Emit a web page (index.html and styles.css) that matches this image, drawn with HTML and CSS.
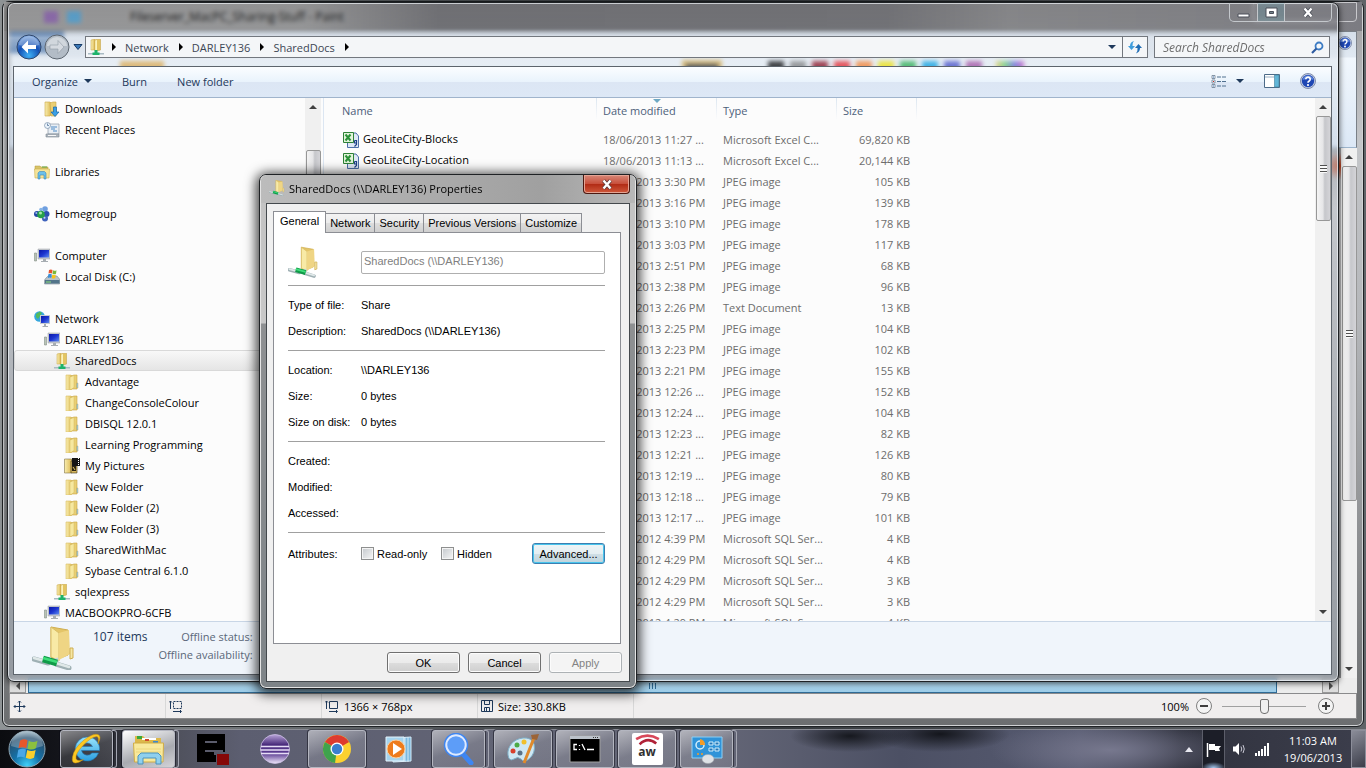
FILE: index.html
```html
<!DOCTYPE html>
<html lang="en">
<head>
    <meta charset="UTF-8">
    <meta name="viewport" content="width=device-width, initial-scale=1.0">
    <title>SharedDocs</title>
    <link rel="stylesheet" href="styles.css">
</head>
<body>
    <!-- Icon library -->
    <svg class="icon-defs" aria-hidden="true">
        <defs>
            <linearGradient id="gold" x1="0" y1="0" x2="1" y2="0">
                <stop offset="0" stop-color="#f9eeb0"/><stop offset="1" stop-color="#dcb954"/>
            </linearGradient>
            <linearGradient id="screen" x1="0" y1="0" x2="1" y2="1">
                <stop offset="0" stop-color="#0a17a8"/><stop offset=".5" stop-color="#1d36d0"/><stop offset="1" stop-color="#5f8df0"/>
            </linearGradient>
            <radialGradient id="blueball" cx=".5" cy=".85" r=".9">
                <stop offset="0" stop-color="#3fb0f5"/><stop offset=".5" stop-color="#1450b4"/><stop offset="1" stop-color="#8fb6e6"/>
            </radialGradient>
            <radialGradient id="orb" cx=".5" cy=".95" r=".95">
                <stop offset="0" stop-color="#3fd0f8"/><stop offset=".4" stop-color="#1471a8"/><stop offset=".8" stop-color="#28506e"/><stop offset="1" stop-color="#9db8c6"/>
            </radialGradient>
            <linearGradient id="eclipse" x1="0" y1="0" x2="0" y2="1">
                <stop offset="0" stop-color="#b9a5d8"/><stop offset=".35" stop-color="#4a2c7c"/><stop offset=".65" stop-color="#5b3c92"/><stop offset="1" stop-color="#f0e8fb"/>
            </linearGradient>
            <linearGradient id="iblue" x1="0" y1="0" x2="0" y2="1">
                <stop offset="0" stop-color="#9be4fb"/><stop offset="1" stop-color="#2a9fe0"/>
            </linearGradient>
        </defs>
        <symbol id="folder" viewBox="0 0 16 16">
            <path d="M2 1h5l1 1v13l-1 1H2z" fill="url(#gold)" stroke="#d8bd62" stroke-width=".6"/>
            <path d="M7 2l3-1h3v14H8z" fill="#e9cf74" stroke="#c9a545" stroke-width=".6"/>
            <path d="M6 3l4-1.500v12L7 15.500H6z" fill="#f6e8a0" stroke="#d0b050" stroke-width=".4"/>
            <path d="M12.500 9h1.500v5h-1.500z" fill="#8fc6e8" stroke="#c9a545" stroke-width=".4"/>
        </symbol>
        <symbol id="netfolder" viewBox="0 0 16 16">
            <path d="M3 1l4-1v11H3z" fill="url(#gold)" stroke="#c9a545" stroke-width=".5"/>
            <path d="M7 1l2-.8h3.500V11L9 12H7z" fill="#e3c561" stroke="#c09c3c" stroke-width=".5"/>
            <path d="M7.200 1.500l1.800-.5v10l-1.800.5z" fill="#fbf2bd"/>
            <path d="M0 14h16v1.500H0z" fill="#a9bbc4"/>
            <path d="M6.500 11h3v2.500h2V16h-7v-2.500h2z" fill="#1db36a"/>
        </symbol>
        <symbol id="bigshare" viewBox="0 0 44 44">
            <path d="M19 1l17 3v25l-13 5-4-3z" fill="#e4c568" stroke="#cfae50"/>
            <path d="M19 1l8 6v28l-8-4z" fill="#f8eaa6" stroke="#d9bd66"/>
            <path d="M27 7l10-3 1 24-11 6z" fill="#efd584"/>
            <path d="M38 22h3v10l-3 1z" fill="#f5e6a4" stroke="#cfae50"/>
            <path d="M24 32l1 5" stroke="#c6d6da" stroke-width="4"/>
            <path d="M2 33l14 4M24 38l13 4" stroke="#9fb0b4" stroke-width="5" stroke-linecap="round"/>
            <path d="M2 32l14 4M24 37l13 4" stroke="#dfe8e8" stroke-width="2.500" stroke-linecap="round"/>
            <path d="M11 33l14 4" stroke="#109a48" stroke-width="7"/>
            <path d="M11 32l14 4" stroke="#3fdd7a" stroke-width="2.500"/>
        </symbol>
        <symbol id="downloads" viewBox="0 0 16 16">
            <path d="M1 1h5l1 1v12l-1 1H1z" fill="url(#gold)" stroke="#c9a545" stroke-width=".6"/>
            <path d="M6 2l3-1h3v14H7z" fill="#e9cf74" stroke="#c9a545" stroke-width=".6"/>
            <path d="M9.500 6h3v5H15l-4 4.500L7 11h2.500z" fill="#3a9fe6" stroke="#1565a8" stroke-width=".7"/>
        </symbol>
        <symbol id="recent" viewBox="0 0 16 16">
            <path d="M4 2h11v10H4z" fill="#e8eef4" stroke="#8d9aa8" stroke-width=".7"/>
            <path d="M7 5h6M7 7h4M9 9h4" stroke="#4c8ac6"/>
            <path d="M2 12h13v3H2z" fill="#aeb7bf" stroke="#7d8790" stroke-width=".6"/>
            <path d="M4 13.500h8" stroke="#f6f6f6"/>
            <circle cx="3.500" cy="3.500" r="3" fill="#eaf3fb" stroke="#7a8fa8" stroke-width=".7"/>
            <path d="M3.500 1.500v2h1.500" stroke="#41648c" stroke-width=".7" fill="none"/>
        </symbol>
        <symbol id="libraries" viewBox="0 0 16 16">
            <path d="M1 2h5l1 1h7v3H1z" fill="#d8c468" stroke="#b59a3c" stroke-width=".5"/>
            <path d="M8 3h5" stroke="#5fa84a"/>
            <path d="M.5 5h15l-.5 9H1z" fill="#f5e49a" stroke="#cdb04e" stroke-width=".6"/>
            <path d="M4 15V9l1.500-1.500h5L12 9v6h-2v-4H6v4z" fill="#6cc0ea" stroke="#3b87b8" stroke-width=".6"/>
        </symbol>
        <symbol id="homegroup" viewBox="0 0 16 16">
            <circle cx="11" cy="3" r="2.800" fill="#6f9fe0"/><circle cx="12.500" cy="8" r="3" fill="#2c50b0"/>
            <circle cx="3" cy="8" r="3" fill="#2448a8"/><circle cx="7" cy="3.500" r="1.800" fill="#86b4e8"/>
            <circle cx="11" cy="12.500" r="3" fill="#3f62bc"/><circle cx="7" cy="8.500" r="3.800" fill="#28a048"/>
            <circle cx="6.500" cy="7" r="1.500" fill="#a6e6ac"/><circle cx="2.300" cy="7" r="1" fill="#9cb8ee"/><circle cx="10.500" cy="11.800" r="1" fill="#c5d6f6"/>
        </symbol>
        <symbol id="computer" viewBox="0 0 16 16">
            <path d="M.5 5h2v8h-2z" fill="#b9c4b6" stroke="#848f88" stroke-width=".6"/>
            <path d="M4 1h12v10H4z" fill="#c8ccd0" stroke="#9a9fa5" stroke-width=".5"/>
            <path d="M5 2h10v7.500H5z" fill="url(#screen)"/>
            <path d="M9 11h3v2h2v1H7v-1h2z" fill="#a7adb2"/>
        </symbol>
        <symbol id="network" viewBox="0 0 16 16">
            <circle cx="5.500" cy="5.500" r="5.300" fill="#35a6dd"/>
            <path d="M2 3l4-2.500 2 1.500-2 3-2 3-2-2zM6 7l3 1-2 3z" fill="#52ba5d"/>
            <path d="M6 4h10v9H6z" fill="#c8ccd0"/><path d="M7 5h8.200v7H7z" fill="url(#screen)"/>
            <path d="M10 13h2v2h2v1H8.500v-1H10z" fill="#a7adb2"/>
        </symbol>
        <symbol id="disk" viewBox="0 0 16 16">
            <path d="M2 9l2-2h9l2.500 3v5H.5v-4z" fill="#b8c2c8" stroke="#6b7a84" stroke-width=".5"/>
            <path d="M1 11h14.500v3.500H1z" fill="#52748a"/><path d="M2 13h5" stroke="#8fe07d"/>
            <path d="M5 1q2-1 3.500 0L8 4.500q-2-.8-3.500 0z" fill="#e8542c"/><path d="M9 1.300q2 1 3.500 0L12 4.700q-2 1-3.500 0z" fill="#7ab83a"/>
            <path d="M4.300 5.200q2-.8 3.500 0L7.300 9Q6 8 3.800 9z" fill="#3a8fd8"/><path d="M8.300 5.400q2 1 3.500 0L11.300 9q-2 1-3.500 0z" fill="#f6c21c"/>
        </symbol>
        <symbol id="pictures" viewBox="0 0 16 16">
            <path d="M.5 1h7v14h-7z" fill="url(#gold)" stroke="#6b5b2c" stroke-width=".5"/>
            <path d="M7 3h6v12H7z" fill="#d8b860" stroke="#3b2f10" stroke-width=".6"/>
            <path d="M8 0h8v8H8z" fill="#151515"/><path d="M14.500 0v8" stroke="#fff" stroke-dasharray="1 1"/>
            <path d="M8 8h4v5H8z" fill="#2b2414"/><path d="M9 9l2 3" stroke="#e8c868"/>
        </symbol>
        <symbol id="excel" viewBox="0 0 16 16">
            <path d="M4.500 1H13l2.500 3v11.500h-11z" fill="#dfe8f6" stroke="#4c6fa8"/>
            <path d="M.5 .5h10v10H.5z" fill="#e2f4da" stroke="#2e8136"/>
            <path d="M2.500 2.500l5 6M7.500 2.500l-5 6" stroke="#2b9138" stroke-width="2"/>
            <path d="M11.500 8.500h2v4l-2 2M11.500 8.500v2.500h2" fill="none" stroke="#1d3f86" stroke-width="1.200"/>
        </symbol>
        <symbol id="help" viewBox="0 0 16 16">
            <circle cx="8" cy="8" r="7.500" fill="#c8d2e4" stroke="#67759a" stroke-width=".8"/>
            <circle cx="8" cy="8" r="6.200" fill="#1f47b4"/><path d="M2.500 7a5.600 5.600 0 0 1 11 0q-5-2-11 0z" fill="#5f87dc"/>
            <path d="M5.800 6.300a2.200 2.200 0 1 1 3.400 1.800Q8 8.800 8 9.800" fill="none" stroke="#fff" stroke-width="1.700"/><circle cx="8" cy="12" r="1.100" fill="#fff"/>
        </symbol>
        <symbol id="flag4" viewBox="0 0 20 20">
            <path d="M4 3q3-2 6-.5L9 9Q6 7.500 2.800 9z" fill="#e9572b"/><path d="M11 3q3.500 2 7 0l-1.300 6q-3.200 2-6.700.3z" fill="#8bc03f"/>
            <path d="M2.600 10.200Q6 8.700 8.800 10L7.600 16.500Q5 15 1.500 16.500z" fill="#4aa7e6"/><path d="M9.800 10.400q3.400 1.700 6.700 0l-1.300 6.200q-3 1.800-6.600 0z" fill="#fbcf2c"/>
        </symbol>
    </svg>

    <main class="desktop">
        <!-- Paint, behind -->
        <section class="window paint" aria-label="Paint">
            <header class="paint-title">
                <span class="quick quick-save"></span>
                <span class="quick quick-undo"></span>
                <span class="paint-name">Fileserver_MacPC_Sharing-Stuff - Paint</span>
                <span class="paint-caption"></span>
            </header>
            <div class="ribbon">
                <span class="file-tab"></span>
                <span class="brush-mark"></span>
                <span class="size-mark"></span>
                <span class="swatches">
                    <i class="swatch black"></i><i class="swatch gray"></i><i class="swatch maroon"></i><i class="swatch red"></i><i class="swatch orange"></i><i class="swatch yellow"></i><i class="swatch green"></i><i class="swatch blue"></i><i class="swatch indigo"></i><i class="swatch purple"></i><i class="swatch rainbow"></i>
                </span>
                <svg class="ribbon-help"><use href="#help"/></svg>
            </div>
            <div class="paint-work">
                <div class="paint-canvas"></div>
                <div class="vscroll paint-v">
                    <span class="arrow up"></span>
                    <span class="thumb"></span>
                    <span class="arrow down"></span>
                </div>
            </div>
            <div class="hscroll">
                <span class="hbtn"><i class="arrow left"></i></span>
                <span class="hthumb"></span>
                <span class="hbtn"><i class="arrow right"></i></span>
            </div>
            <footer class="status">
                <div class="cell"><svg width="13" height="13" viewBox="0 0 13 13" fill="none" stroke="#1e395b"><path d="M6.500 1v11M1 6.500h11M5 2.500l1.500-1.500L8 2.500M5 10.500L6.500 12 8 10.500M2.500 5L1 6.500 2.500 8M10.500 5L12 6.500 10.500 8"/></svg></div>
                <div class="cell"><svg width="14" height="13" viewBox="0 0 14 13" fill="none" stroke="#1e395b"><path d="M4.500 1.500h8v7h-8z" stroke-dasharray="2 1"/><path d="M1.500 9V1M0 2.500L1.500 1 3 2.500M4 11.500h8M11 10l1.500 1.500L11 13"/></svg></div>
                <div class="cell"><svg width="14" height="13" viewBox="0 0 14 13" fill="none" stroke="#1e395b"><path d="M4.500 1.500h8v7h-8z"/><path d="M1.500 9V1M0 2.500L1.500 1 3 2.500M4 11.500h8M11 10l1.500 1.500L11 13"/></svg>1366 × 768px</div>
                <div class="cell"><svg width="12" height="12" viewBox="0 0 12 12" fill="none" stroke="#1e395b"><path d="M.5 .5h11v11H.5zM3.500 .5v4h5v-4M3.500 11.500v-4h5v4M5.500 8v3"/></svg>Size: 330.8KB</div>
                <div class="zoom">
                    <label for="zoom">100%</label>
                    <button class="round" aria-label="Zoom out"><svg viewBox="0 0 10 10"><path d="M1 5h8"/></svg></button>
                    <input type="range" id="zoom" min="0" max="100" value="50">
                    <button class="round" aria-label="Zoom in"><svg viewBox="0 0 10 10"><path d="M1 5h8M5 1v8"/></svg></button>
                </div>
            </footer>
        </section>

        <!-- Explorer -->
        <section class="window explorer" aria-label="SharedDocs">
            <header class="caption-row">
                <div class="caption">
                    <button aria-label="Minimize"><svg width="13" height="11" viewBox="0 0 13 11"><path d="M1 7h11v3H1z" fill="#fff" stroke="#4a4e58"/></svg></button>
                    <button class="max" aria-label="Maximize"><svg width="13" height="11" viewBox="0 0 13 11"><path d="M1 1h11v9H1zM4.500 4.500h4v2h-4z" fill="#fff" fill-rule="evenodd" stroke="#4a4e58"/></svg></button>
                    <button class="cls" aria-label="Close"><svg width="12" height="11" viewBox="0 0 12 11"><path d="M2.500 1.500l7 8M9.500 1.500l-7 8" stroke="#4a4e58" stroke-width="4"/><path d="M2.500 1.500l7 8M9.500 1.500l-7 8" stroke="#fff" stroke-width="2.400"/></svg></button>
                </div>
            </header>
            <div class="address-row">
                <div class="travel">
                    <button aria-label="Back"><svg width="26" height="26" viewBox="0 0 26 26"><circle cx="13" cy="13" r="12" fill="url(#blueball)" stroke="#31476a"/><path d="M3 11a10 9 0 0 1 20 0q-10 3-20 0z" fill="#fff" opacity=".3"/><path d="M12 6.500L5.500 13l6.500 6.500v-4.500h8v-4h-8z" fill="#fff"/></svg></button>
                    <button aria-label="Forward"><svg width="26" height="26" viewBox="0 0 26 26"><circle cx="13" cy="13" r="12" fill="#b3bcc6" stroke="#5d6670"/><path d="M3 12a10 9 0 0 1 20 0z" fill="#fff" opacity=".4"/><path d="M14 6.500l6 6.500-6 6.500v-4.500H6v-4h8z" fill="#d5dae0" stroke="#929ba5" stroke-width=".6"/></svg></button>
                    <button class="recent-btn" aria-label="Recent pages"><svg width="10" height="6" viewBox="0 0 10 6"><path d="M1 .5h8L5 5.500z" fill="#3a78b8" stroke="#173a66"/></svg></button>
                </div>
                <nav class="crumbs" aria-label="Path">
                    <svg class="ico"><use href="#netfolder"/></svg>
                    <i class="tri"></i><a href="#">Network</a>
                    <i class="tri"></i><a href="#">DARLEY136</a>
                    <i class="tri"></i><a href="#">SharedDocs</a>
                    <i class="tri"></i>
                    <button class="crumb-drop" aria-label="Previous locations"><i class="caret"></i></button>
                    <button class="refresh" aria-label="Refresh"><svg width="14" height="14" viewBox="0 0 14 14"><path d="M0 6h2q0-4 4-5-2 2-1.500 5H7L3.500 10z" fill="#3f9ddc"/><path d="M14 8h-2q0 4-4 5.500Q10 11 9.500 8H7l3.500-4z" fill="#1f6cb4"/></svg></button>
                </nav>
                <div class="search">
                    <input type="text" aria-label="Search SharedDocs" placeholder="Search SharedDocs">
                    <svg width="13" height="13" viewBox="0 0 13 13" fill="none"><circle cx="8" cy="5" r="3.500" stroke="#3d7cc4" stroke-width="1.800"/><path d="M5.500 7.500L1 12" stroke="#2d5aa0" stroke-width="2.200"/></svg>
                </div>
            </div>
            <div class="client">
                <div class="toolbar">
                    <button>Organize <i class="caret"></i></button>
                    <button>Burn</button>
                    <button>New folder</button>
                    <div class="tools">
                        <button aria-label="Change view"><svg width="16" height="13" viewBox="0 0 16 13"><path d="M1 .5h3v3H1zM1 5h3v3H1zM1 9.500h3v3H1z" fill="#fff" stroke="#6a7c90" stroke-width=".8"/><path d="M2 2h1M2 11h1" stroke="#2d6cb8"/><path d="M2 6.500h1" stroke="#c03030"/><path d="M6 2h10M6 6.500h10M6 11h10" stroke="#50708f" stroke-dasharray="4 1"/></svg></button>
                        <button class="view-drop" aria-label="More options"><i class="caret"></i></button>
                        <button aria-label="Preview pane"><svg width="16" height="14" viewBox="0 0 16 14"><path d="M.5 .5h15v13H.5z" fill="#fff" stroke="#4d6b88"/><path d="M1 3h9.500" stroke="#9ab0c4"/><path d="M10.500 1H15v12h-4.500z" fill="#62b6d8" stroke="#3f7f9c" stroke-width=".6"/></svg></button>
                        <button aria-label="Help"><svg class="ico"><use href="#help"/></svg></button>
                    </div>
                </div>
                <div class="panes">
                    <nav class="tree" aria-label="Folders">
                        <ul>
                            <li class="lv1"><a href="#"><svg class="ico"><use href="#downloads"/></svg>Downloads</a></li>
                            <li class="lv1"><a href="#"><svg class="ico"><use href="#recent"/></svg>Recent Places</a></li>
                            <li class="group"><a href="#"><svg class="ico"><use href="#libraries"/></svg>Libraries</a></li>
                            <li class="group"><a href="#"><svg class="ico"><use href="#homegroup"/></svg>Homegroup</a></li>
                            <li class="group"><a href="#"><svg class="ico"><use href="#computer"/></svg>Computer</a></li>
                            <li class="lv1"><a href="#"><svg class="ico"><use href="#disk"/></svg>Local Disk (C:)</a></li>
                            <li class="group"><a href="#"><svg class="ico"><use href="#network"/></svg>Network</a></li>
                            <li class="lv1"><a href="#"><svg class="ico"><use href="#computer"/></svg>DARLEY136</a></li>
                            <li class="lv2 selected"><a href="#"><svg class="ico"><use href="#netfolder"/></svg>SharedDocs</a></li>
                            <li class="lv3"><a href="#"><svg class="ico"><use href="#folder"/></svg>Advantage</a></li>
                            <li class="lv3"><a href="#"><svg class="ico"><use href="#folder"/></svg>ChangeConsoleColour</a></li>
                            <li class="lv3"><a href="#"><svg class="ico"><use href="#folder"/></svg>DBISQL 12.0.1</a></li>
                            <li class="lv3"><a href="#"><svg class="ico"><use href="#folder"/></svg>Learning Programming</a></li>
                            <li class="lv3"><a href="#"><svg class="ico"><use href="#pictures"/></svg>My Pictures</a></li>
                            <li class="lv3"><a href="#"><svg class="ico"><use href="#folder"/></svg>New Folder</a></li>
                            <li class="lv3"><a href="#"><svg class="ico"><use href="#folder"/></svg>New Folder (2)</a></li>
                            <li class="lv3"><a href="#"><svg class="ico"><use href="#folder"/></svg>New Folder (3)</a></li>
                            <li class="lv3"><a href="#"><svg class="ico"><use href="#folder"/></svg>SharedWithMac</a></li>
                            <li class="lv3"><a href="#"><svg class="ico"><use href="#folder"/></svg>Sybase Central 6.1.0</a></li>
                            <li class="lv2"><a href="#"><svg class="ico"><use href="#netfolder"/></svg>sqlexpress</a></li>
                            <li class="lv1"><a href="#"><svg class="ico"><use href="#computer"/></svg>MACBOOKPRO-6CFB</a></li>
                        </ul>
                        <div class="vscroll tree-v">
                            <span class="arrow up"></span>
                            <span class="thumb"></span>
                            <span class="arrow down"></span>
                        </div>
                    </nav>
                    <div class="files">
                        <table>
                            <colgroup><col class="c-name"><col class="c-date"><col class="c-type"><col class="c-size"></colgroup>
                            <thead>
                                <tr><th>Name</th><th class="sorted">Date modified</th><th>Type</th><th>Size</th></tr>
                            </thead>
                            <tbody>
                                <tr><td><svg class="ico"><use href="#excel"/></svg>GeoLiteCity-Blocks</td><td>18/06/2013 11:27 ...</td><td>Microsoft Excel C...</td><td>69,820 KB</td></tr>
                                <tr><td><svg class="ico"><use href="#excel"/></svg>GeoLiteCity-Location</td><td>18/06/2013 11:13 ...</td><td>Microsoft Excel C...</td><td>20,144 KB</td></tr>
                                <tr><td></td><td>18/06/2013 3:30 PM</td><td>JPEG image</td><td>105 KB</td></tr>
                                <tr><td></td><td>18/06/2013 3:16 PM</td><td>JPEG image</td><td>139 KB</td></tr>
                                <tr><td></td><td>18/06/2013 3:10 PM</td><td>JPEG image</td><td>178 KB</td></tr>
                                <tr><td></td><td>18/06/2013 3:03 PM</td><td>JPEG image</td><td>117 KB</td></tr>
                                <tr><td></td><td>18/06/2013 2:51 PM</td><td>JPEG image</td><td>68 KB</td></tr>
                                <tr><td></td><td>18/06/2013 2:38 PM</td><td>JPEG image</td><td>96 KB</td></tr>
                                <tr><td></td><td>18/06/2013 2:26 PM</td><td>Text Document</td><td>13 KB</td></tr>
                                <tr><td></td><td>18/06/2013 2:25 PM</td><td>JPEG image</td><td>104 KB</td></tr>
                                <tr><td></td><td>18/06/2013 2:23 PM</td><td>JPEG image</td><td>102 KB</td></tr>
                                <tr><td></td><td>18/06/2013 2:21 PM</td><td>JPEG image</td><td>155 KB</td></tr>
                                <tr><td></td><td>18/06/2013 12:26 ...</td><td>JPEG image</td><td>152 KB</td></tr>
                                <tr><td></td><td>18/06/2013 12:24 ...</td><td>JPEG image</td><td>104 KB</td></tr>
                                <tr><td></td><td>18/06/2013 12:23 ...</td><td>JPEG image</td><td>82 KB</td></tr>
                                <tr><td></td><td>18/06/2013 12:21 ...</td><td>JPEG image</td><td>126 KB</td></tr>
                                <tr><td></td><td>18/06/2013 12:19 ...</td><td>JPEG image</td><td>80 KB</td></tr>
                                <tr><td></td><td>18/06/2013 12:18 ...</td><td>JPEG image</td><td>79 KB</td></tr>
                                <tr><td></td><td>18/06/2013 12:17 ...</td><td>JPEG image</td><td>101 KB</td></tr>
                                <tr><td></td><td>12/12/2012 4:39 PM</td><td>Microsoft SQL Ser...</td><td>4 KB</td></tr>
                                <tr><td></td><td>12/12/2012 4:29 PM</td><td>Microsoft SQL Ser...</td><td>4 KB</td></tr>
                                <tr><td></td><td>12/12/2012 4:29 PM</td><td>Microsoft SQL Ser...</td><td>3 KB</td></tr>
                                <tr><td></td><td>12/12/2012 4:29 PM</td><td>Microsoft SQL Ser...</td><td>3 KB</td></tr>
                                <tr><td></td><td>12/12/2012 4:29 PM</td><td>Microsoft SQL Ser...</td><td>4 KB</td></tr>
                            </tbody>
                        </table>
                        <div class="vscroll files-v">
                            <span class="arrow up"></span>
                            <span class="thumb"></span>
                            <span class="arrow down"></span>
                        </div>
                    </div>
                </div>
                <footer class="details">
                    <svg width="44" height="44"><use href="#bigshare"/></svg>
                    <strong>107 items</strong>
                    <div class="offline"><span>Offline status:</span><span>Offline availability:</span></div>
                </footer>
            </div>
        </section>

        <!-- Properties dialog -->
        <section class="window dialog" role="dialog" aria-label="SharedDocs Properties">
            <header class="dialog-title">
                <svg class="ico"><use href="#bigshare"/></svg>
                <h1>SharedDocs (\\DARLEY136) Properties</h1>
                <button class="close" aria-label="Close"><svg width="12" height="11" viewBox="0 0 12 11"><path d="M2.500 1.500l7 8M9.500 1.500l-7 8" stroke="#5c3a3a" stroke-width="4"/><path d="M2.500 1.500l7 8M9.500 1.500l-7 8" stroke="#fff" stroke-width="2.400"/></svg></button>
            </header>
            <form class="dialog-body">
                <div class="tabs">
                    <button type="button" class="tab active">General</button>
                    <button type="button" class="tab">Network</button>
                    <button type="button" class="tab">Security</button>
                    <button type="button" class="tab">Previous Versions</button>
                    <button type="button" class="tab">Customize</button>
                </div>
                <div class="page">
                    <div class="page-head">
                        <svg width="31" height="32"><use href="#bigshare"/></svg>
                        <input type="text" aria-label="Name" value="SharedDocs (\\DARLEY136)" disabled>
                    </div>
                    <dl>
                        <dt>Type of file:</dt><dd>Share</dd>
                        <dt>Description:</dt><dd>SharedDocs (\\DARLEY136)</dd>
                    </dl>
                    <dl>
                        <dt>Location:</dt><dd>\\DARLEY136</dd>
                        <dt>Size:</dt><dd>0 bytes</dd>
                        <dt>Size on disk:</dt><dd>0 bytes</dd>
                    </dl>
                    <dl>
                        <dt>Created:</dt><dd></dd>
                        <dt>Modified:</dt><dd></dd>
                        <dt>Accessed:</dt><dd></dd>
                    </dl>
                    <div class="attributes">
                        <span class="attr-label">Attributes:</span>
                        <label class="check"><input type="checkbox">Read-only</label>
                        <label class="check"><input type="checkbox">Hidden</label>
                        <button type="button" class="btn default">Advanced...</button>
                    </div>
                </div>
                <div class="actions">
                    <button type="button" class="btn">OK</button>
                    <button type="button" class="btn">Cancel</button>
                    <button type="button" class="btn" disabled>Apply</button>
                </div>
            </form>
        </section>
    </main>

    <footer class="taskbar">
        <button class="start" aria-label="Start"><svg width="38" height="38" viewBox="0 0 38 38"><circle cx="19" cy="19" r="18" fill="url(#orb)" stroke="#8ea6b4"/><path d="M3 16a16 15 0 0 1 32 0q-16 6-32 0z" fill="#fff" opacity=".25"/><svg x="7" y="7" width="25" height="25"><use href="#flag4"/></svg></svg></button>
        <div class="apps">
            <button class="app open stack dark" aria-label="Internet Explorer"><svg viewBox="0 0 32 32"><path d="M16 4a12 12 0 1 0 11.500 16h-6.500a6 6 0 0 1-10.500-2.500h18A12 12 0 0 0 16 4zm-5.500 9.500a6 6 0 0 1 11 0z" fill="url(#iblue)" stroke="#2079b8" stroke-width=".6"/><path d="M27 11q4-8 0-9.500Q22 0 13 7 3 15 1.500 24q-1 6 3 6 3 0 8-3.500Q6 29 5 25.500 4 21 12 12.500 20 4 25.500 3.500q3 0 1.500 7.500z" fill="#fcc822" stroke="#c98f10" stroke-width=".5"/></svg></button>
            <button class="app open stack lit" aria-label="Windows Explorer"><svg viewBox="0 0 32 32"><path d="M2 3h8l2 2h16v6H2z" fill="#dcb84a"/><path d="M4 3h5v3H4z" fill="#3aa83a"/><path d="M9 5h14v2H9z" fill="#fff"/><path d="M12 6h4v2h-4z" fill="#d04a2c"/><path d="M20 8h5v2h-5z" fill="#3a8ad0"/><path d="M.5 10h30L30 29H1.500z" fill="#f8e99c" stroke="#d0ad46"/><path d="M3 16h25M3 19h25" stroke="#ecd67a"/><path d="M5 31v-8l3-3h17l3 3v8h-5v-6H10v6z" fill="#8fd0ee" stroke="#4b93bd"/></svg></button>
            <button class="app" aria-label="Editor"><svg viewBox="0 0 32 32"><path d="M0 1h28v18H17v3h2v7H0z" fill="#000"/><path d="M8 9h12M8 18h18" stroke="#5a5c6c" stroke-width="2"/><path d="M20 21h12v11H20z" fill="#860808"/></svg></button>
            <button class="app" aria-label="Eclipse"><svg viewBox="0 0 32 32"><circle cx="16" cy="16" r="14.500" fill="url(#eclipse)" stroke="#cdbfe4" stroke-width=".8"/><path d="M2 13.500h28M1.500 17h29M2 20.500h28" stroke="#e6ddf6" stroke-width="1.400"/></svg></button>
            <button class="app open" aria-label="Chrome"><svg viewBox="0 0 32 32"><circle cx="16" cy="16" r="14" fill="#fbd130"/><path d="M16 16L3.900 9A14 14 0 0 1 28.100 9z" fill="#dd3b2f"/><path d="M16 16L3.900 9A14 14 0 0 0 14 30z" fill="#3fa34d"/><circle cx="16" cy="16" r="6.500" fill="#fff"/><circle cx="16" cy="16" r="5.200" fill="#3a7fd0"/></svg></button>
            <button class="app" aria-label="Media Player"><svg viewBox="0 0 32 32"><path d="M10 5l18-1v24l-18 1z" fill="#7ab8de" stroke="#d4ebf8"/><path d="M25 4v25M22 4v25" stroke="#d4ebf8"/><path d="M3 4h18v24H3z" fill="#a5d4ee" stroke="#e5f3fb"/><circle cx="13" cy="16" r="9" fill="#ee7b1c" stroke="#fbd0a0"/><path d="M10 10l9 6-9 6z" fill="#fff"/></svg></button>
            <button class="app open stack" aria-label="Search"><svg viewBox="0 0 32 32"><path d="M19 20l9 10" stroke="#3e86f2" stroke-width="5" stroke-linecap="round"/><circle cx="13" cy="12" r="10" fill="#5d9df8" stroke="#dfeafe" stroke-width="2.500"/><circle cx="13" cy="12" r="11.500" fill="none" stroke="#3e86f2" stroke-width="1.500"/></svg></button>
            <button class="app open" aria-label="Paint"><svg viewBox="0 0 32 32"><path d="M16 5C6 6 0 14 1 22q1 7 6 4 4-3 7 0 3 4 8 0 7-6 5-15Q24 4 16 5z" fill="#cfe8f4" stroke="#7fb0c8"/><circle cx="6" cy="18" r="2.500" fill="#d8402c"/><circle cx="10" cy="12" r="2.500" fill="#4cab46"/><circle cx="17" cy="9" r="2.500" fill="#f1c02c"/><circle cx="13" cy="20" r="2.500" fill="#5a7288"/><path d="M27 5L17 30" stroke="#e08a2c" stroke-width="3"/><path d="M25 6l-1-4 8-1-2 6z" fill="#9c6438"/></svg></button>
            <button class="app open" aria-label="Command Prompt"><svg viewBox="0 0 32 32"><path d="M1 3h30v26H1z" fill="#000" stroke="#a0a0a0"/><path d="M1 3h30v3H1z" fill="#bcc2ca"/><path d="M24 4.500h5" stroke="#333" stroke-dasharray="1 1"/><path d="M8 11.500H5v5h3M10.500 12v1M10.500 16v1M13 11l3 6M18 16.500h7" stroke="#fff" stroke-width="1.300" fill="none"/></svg></button>
            <button class="app open" aria-label="aw"><span class="aw"><svg viewBox="0 0 32 16"><path d="M3 7Q16-1 29 7" fill="none" stroke="#d8485a" stroke-width="3"/><path d="M7 13Q16 4 26 12" fill="none" stroke="#b02238" stroke-width="3"/></svg>aw</span></button>
            <button class="app open stack" aria-label="Control Panel"><svg viewBox="0 0 32 32"><path d="M1 4h30v21H1z" fill="#2f93d8" stroke="#8fd0f4"/><circle cx="9" cy="12" r="4" fill="none" stroke="#d2effc" stroke-width="1.500"/><path d="M9 12V6a6 6 0 0 1 5 6z" fill="#f49c28"/><path d="M18 9h4v3h-4zM24 9h4v3h-4zM18 15h4v3h-4zM24 15h4v3h-4z" fill="#2476b8" stroke="#d2effc"/><circle cx="7" cy="21" r="1" fill="#f49c28"/><circle cx="11" cy="21" r="1" fill="#f49c28"/><ellipse cx="17" cy="26" rx="6" ry="4.500" fill="#dfe2e6" stroke="#9da2a8" stroke-width=".5"/></svg></button>
        </div>
        <div class="tray">
            <button class="tray-up" aria-label="Show hidden icons"><svg width="8" height="5" viewBox="0 0 8 5"><path d="M4 0l4 5H0z" fill="#e8e8f0"/></svg></button>
            <button class="tray-flag" aria-label="Action Center"><svg width="16" height="15" viewBox="0 0 16 15"><path d="M1.500 1v14" stroke="#fff" stroke-width="1.500"/><path d="M3 2h6v2h6l-2 2.500 1 2.500h-5V8H3z" fill="#fff"/></svg></button>
            <button class="tray-sound" aria-label="Volume"><svg width="13" height="14" viewBox="0 0 13 14"><path d="M0 4.500h2.500L6 1v12L2.500 9.500H0z" fill="#fff"/><path d="M8 4.500q1.500 2.500 0 5M10 3q2.500 4 0 8" stroke="#c8c8d4" fill="none"/></svg></button>
            <button class="tray-net" aria-label="Signal"><svg width="16" height="13" viewBox="0 0 16 13"><path d="M0 10h2v3H0zM3 8h2v5H3zM6 6h2v7H6zM9 3h2v10H9zM12 0h2v13h-2z" fill="#fff"/></svg></button>
            <time class="clock"><span>11:03 AM</span><span>19/06/2013</span></time>
            <button class="show-desktop" aria-label="Show desktop"></button>
        </div>
    </footer>
</body>
</html>
```
FILE: styles.css
```css
* {
    box-sizing: border-box;
}
body {
    margin: 0;
    height: 100vh;
    display: flex;
    flex-direction: column;
    overflow: hidden;
    font-family: "Open Sans", "Noto Sans", sans-serif;
    font-size: 11px;
    color: #000;
    background-color: #2b2e33;
}
button {
    font: inherit;
    color: inherit;
    background: none;
    border: none;
    padding: 0;
    display: flex;
    align-items: center;
    justify-content: center;
}
a {
    color: inherit;
    text-decoration: none;
}
.icon-defs {
    position: absolute;
    width: 0;
    height: 0;
}
.ico {
    width: 16px;
    height: 16px;
    flex: none;
}
.desktop {
    flex: 1;
    position: relative;
    min-height: 0;
    background: linear-gradient(90deg, #8f9496, #303438 50%, #606468);
}
.window {
    position: absolute;
    display: flex;
    flex-direction: column;
    border: 1px solid #1f2225;
    border-radius: 7px;
}

/* Scrollbars */
.vscroll {
    width: 16px;
    flex: none;
    display: flex;
    flex-direction: column;
    align-items: center;
    background-color: #f0f0f0;
}
.arrow {
    width: 0;
    height: 0;
    border: 4px solid transparent;
}
.arrow.up {
    border-top: 0;
    border-bottom: 4px solid #404040;
    margin: 7px 0;
}
.arrow.down {
    border-bottom: 0;
    border-top: 4px solid #404040;
    margin: auto 0 7px;
}
.arrow.left {
    border-left: 0;
    border-right: 4px solid #505050;
}
.arrow.right {
    border-right: 0;
    border-left: 4px solid #505050;
}
.thumb {
    width: 15px;
    border: 1px solid #979797;
    border-radius: 2px;
    display: flex;
    align-items: center;
    justify-content: center;
    background: linear-gradient(90deg, #f4f4f4, #e6e6e8 45%, #c6c7cb 60%, #d4d4d8);
}
.thumb::before {
    content: "";
    width: 7px;
    height: 8px;
    background: repeating-linear-gradient(#505050 0 1px, #fafafa 1px 3px);
}
.caret {
    display: inline-block;
    border: 4px solid transparent;
    border-top: 4px solid #1e395b;
    border-bottom: 0;
}

/* Paint window */
.paint {
    inset: 1px 2px 2px 2px;
    padding: 0 6px 7px;
    background: linear-gradient(180deg, #77777a, #a8a8aa 30px, #c4c6c9 140px, #b5b7ba 320px, #6c6e70 100%);
    box-shadow: inset 0 0 0 1px #d0d2d4;
}
.paint-title {
    height: 29px;
    display: flex;
    align-items: center;
    margin: 0 -5px;
    padding: 0 5px 0 40px;
    background: linear-gradient(90deg, #9c9c9c, #9a9a9a 22%, #6c6c70 32%, #6e6e72 65%, #88888a 74%, #7c7c82);
}
.quick {
    width: 14px;
    height: 12px;
    margin-right: 9px;
}
.quick-save {
    background-color: #8c62b0;
}
.quick-undo {
    background-color: #4fa4d8;
}
.paint-name {
    margin-left: 40px;
    font-size: 12px;
}
.paint-caption {
    margin-left: auto;
    align-self: flex-start;
    width: 104px;
    height: 20px;
    border: 1px solid #c8c8cc;
    border-radius: 0 0 4px 4px;
}
.ribbon {
    height: 117px;
    display: flex;
    background: linear-gradient(#d5dfea, #e1e9f2 25px, #f1f7fd 26px, #dce8f6);
    border: 1px solid #7a8087;
    border-bottom-color: #9cb4cc;
}
.file-tab {
    width: 54px;
    height: 21px;
    background-color: #2c5f9e;
}
.brush-mark {
    width: 44px;
    height: 14px;
    margin: 29px 0 0 56px;
    background-color: #e2ac4c;
}
.size-mark {
    width: 40px;
    height: 18px;
    margin: 28px 0 0 518px;
    background-color: #2c2820;
    border: 4px solid #d8ac4c;
}
.swatches {
    display: flex;
    gap: 6px;
    margin: 29px 0 0 46px;
}
.swatch {
    width: 16px;
    height: 16px;
}
.black { background-color: #000; }
.gray { background-color: #7f7f7f; }
.maroon { background-color: #880015; }
.red { background-color: #ed1c24; }
.orange { background-color: #ff7f27; }
.yellow { background-color: #f6e800; }
.green { background-color: #22b14c; }
.blue { background-color: #00a2e8; }
.indigo { background-color: #3f48cc; }
.purple { background-color: #a349a4; }
.rainbow {
    width: 28px;
    margin-left: 8px;
    background: linear-gradient(90deg, #f0d060, #60d070, #6060e0, #d050c0);
}
.ribbon-help {
    width: 14px;
    height: 14px;
    margin: 4px 4px 0 auto;
}
.paint-work {
    flex: 1;
    min-height: 0;
    display: flex;
}
.paint-canvas {
    flex: 1;
    background: radial-gradient(ellipse 20px 14px at 100% 18px, #c0401c, transparent), linear-gradient(#a0a2a6, #c8c8ca 60px, #8a8c8e);
}
.paint-v .thumb {
    height: 335px;
}
.hscroll {
    height: 15px;
    display: flex;
    background-color: #ececec;
}
.hbtn {
    width: 17px;
    display: flex;
    align-items: center;
    justify-content: center;
    background-color: #dcdcdc;
    border: 1px solid #989898;
}
.hthumb {
    flex: 1;
    margin: 0 45px 0 2px;
    border: 1px solid #2f6b96;
    background: repeating-linear-gradient(90deg, #2f6b96 0 1px, transparent 1px 3px) center 4px / 8px 6px no-repeat, linear-gradient(#b8dcf0, #9ccce8);
}
.hscroll .hbtn:last-child {
    margin-right: 18px;
}
.status {
    height: 26px;
    display: flex;
    background-color: #f0eeee;
    border: 1px solid #8a8a8c;
}
.cell {
    width: 156px;
    display: flex;
    align-items: center;
    gap: 5px;
    padding-left: 3px;
    border-right: 1px solid #d8d8d8;
}
.zoom {
    flex: 1;
    display: flex;
    align-items: center;
    justify-content: flex-end;
    padding-right: 22px;
}
.zoom label {
    margin-right: 7px;
}
.zoom input {
    appearance: none;
    width: 84px;
    height: 16px;
    margin: 0 12px 0 10px;
    background: linear-gradient(#a0a0a0, #a0a0a0) center / 100% 1px no-repeat;
}
.zoom input::-webkit-slider-thumb {
    appearance: none;
    width: 9px;
    height: 15px;
    border: 1px solid #707070;
    border-radius: 2px 2px 4px 4px;
    background-color: #f0f0f0;
}
.round {
    width: 16px;
    height: 16px;
    border: 1px solid #808080;
    border-radius: 50%;
    background-color: #f4f4f4;
}
.round svg {
    width: 10px;
    height: 10px;
    stroke: #404040;
    stroke-width: 2px;
}

/* Explorer window */
.explorer {
    inset: 2px 27px 47px 7px;
    padding: 0 6px 6px 5px;
    background: linear-gradient(180deg, rgba(120, 120, 124, .25), rgba(130, 134, 140, .2) 26px, rgba(224, 230, 238, .6) 35px, rgba(215, 222, 230, .35) 54px, rgba(205, 214, 224, .3) 70px, rgba(160, 168, 178, .55));
    backdrop-filter: blur(2px);
    box-shadow: inset 0 0 0 1px rgba(240, 244, 248, .7), 0 1px 6px rgba(0, 0, 0, .7);
}
.caption-row {
    height: 33px;
    display: flex;
    justify-content: flex-end;
}
.caption {
    display: flex;
    height: 19px;
    border: 1px solid #c4c8cc;
    border-top: 0;
    border-radius: 0 0 5px 5px;
    overflow: hidden;
}
.caption button {
    width: 28px;
    border-right: 1px solid #c4c8cc;
}
.caption .max {
    width: 27px;
    background-color: rgba(90, 160, 175, .25);
}
.caption .cls {
    width: 46px;
    border-right: 0;
}
.address-row {
    display: flex;
    align-items: center;
    height: 22px;
    margin-bottom: 8px;
    padding: 0 2px 0 3px;
}
.travel {
    display: flex;
    align-items: center;
    width: 69px;
    gap: 2px;
}
.recent-btn {
    margin-left: 1px;
}
.crumbs {
    flex: 1;
    height: 22px;
    display: flex;
    align-items: center;
    padding-left: 2px;
    color: #3c4654;
    background-color: #f4f6f8;
    border: 1px solid #72777e;
}
.crumbs .tri {
    margin: 0 9px 0 8px;
}
.crumbs a + .tri {
    margin-left: 10px;
}
.tri {
    border: 4px solid transparent;
    border-left: 4px solid #000;
    border-right: 0;
}
.crumb-drop {
    margin-left: auto;
    padding: 0 6px;
}
.refresh {
    width: 25px;
    height: 20px;
    border-left: 1px solid #72777e;
}
.search {
    width: 176px;
    height: 22px;
    margin-left: 6px;
    display: flex;
    align-items: center;
    padding: 0 5px 0 8px;
    background-color: #f4f6f8;
    border: 1px solid #72777e;
}
.search input {
    flex: 1;
    min-width: 0;
    padding: 0;
    font: inherit;
    font-size: 12px;
    font-style: italic;
    background: none;
    border: none;
}
.search input::placeholder {
    color: #6d6d6d;
}
.client {
    flex: 1;
    min-height: 0;
    display: flex;
    flex-direction: column;
    border: 1px solid #5d646c;
    background-color: #fcfcfc;
}
.toolbar {
    height: 31px;
    flex: none;
    display: flex;
    align-items: center;
    gap: 30px;
    padding: 0 15px 2px 18px;
    color: #1e395b;
    border-bottom: 1px solid #a0b4cc;
    background: linear-gradient(#fbfdff, #e9f3fc 50%, #dce6f4 51%, #dde8f6);
}
.toolbar > button {
    gap: 6px;
}
.tools {
    margin-left: auto;
    display: flex;
    align-items: center;
    gap: 20px;
}
.tools .view-drop {
    margin-left: -11px;
}
.panes {
    flex: 1;
    min-height: 0;
    display: flex;
}
.tree {
    width: 310px;
    flex: none;
    display: flex;
    padding-right: 2px;
    border-right: 1px solid #dce6f2;
}
.tree ul {
    flex: 1;
    list-style: none;
    margin: 0;
    padding: 0;
    overflow: hidden;
}
.tree li {
    padding-left: 19px;
    border: 1px solid transparent;
    height: 21px;
}
.tree a {
    display: flex;
    align-items: center;
    gap: 5px;
    height: 19px;
}
.tree .group {
    margin-top: 21px;
}
.tree .lv1 { padding-left: 29px; }
.tree .lv2 { padding-left: 39px; }
.tree .lv3 { padding-left: 49px; }
.tree .selected {
    border-color: #d9d9d9;
    border-radius: 3px;
    background: linear-gradient(#f8f8f8, #e5e5e5);
}
.tree-v .thumb {
    margin-top: 34px;
    height: 250px;
}
.files {
    flex: 1;
    display: flex;
    justify-content: space-between;
    overflow: hidden;
}
.files table {
    width: 593px;
    table-layout: fixed;
    border-collapse: collapse;
    align-self: flex-start;
    color: #6d6d6d;
}
.c-name { width: 273px; }
.c-date { width: 120px; }
.c-type { width: 120px; }
.c-size { width: 80px; }
.files th {
    position: relative;
    height: 31px;
    padding: 0 6px 7px;
    text-align: left;
    font-weight: normal;
    color: #4c607a;
    background: linear-gradient(#dce6f0, #fcfcfc) right top / 1px 22px no-repeat;
}
.files th:first-child {
    padding-left: 18px;
}
.sorted::before {
    content: "";
    position: absolute;
    top: 1px;
    left: 50%;
    margin-left: -4px;
    border: 4px solid transparent;
    border-top: 4px solid #6fa9c4;
    border-bottom: 0;
}
.files td {
    height: 21px;
    padding: 0 6px;
    white-space: nowrap;
}
.files td:first-child {
    padding-left: 19px;
    color: #000;
}
.files td .ico {
    vertical-align: middle;
    margin-right: 4px;
}
.files td:last-child {
    text-align: right;
    padding-right: 7px;
}
.files-v .thumb {
    height: 105px;
}
.details {
    height: 53px;
    flex: none;
    display: flex;
    align-items: flex-start;
    padding: 4px 0 0 18px;
    background-color: #f0f5fb;
    border-top: 1px solid #c9d6e6;
}
.details strong {
    font-size: 12px;
    font-weight: normal;
    color: #1e395b;
    margin: 2px 0 0 17px;
}
.offline {
    width: 105px;
    display: flex;
    flex-direction: column;
    align-items: flex-end;
    padding-top: 2px;
    line-height: 18px;
    color: #5a6779;
}

/* Properties dialog */
.dialog {
    left: 259px;
    top: 174px;
    width: 378px;
    padding: 0 6px 6px;
    font-family: "Liberation Sans", Arial, sans-serif;
    background: linear-gradient(#c2c2c2, #c8c8c8 148px, #8e9092 149px, #7e8488);
    box-shadow: inset 0 0 0 1px #e4e4e4, 0 2px 12px 3px rgba(0, 0, 0, .75);
}
.dialog-title {
    height: 28px;
    margin: 0 -5px;
    padding: 0 5px 2px 8px;
    display: flex;
    align-items: center;
    gap: 4px;
    background: linear-gradient(90deg, #bcbcbc, #a0a0a0 75%, #b8b8b8);
    border-radius: 6px 6px 0 0;
}
.dialog-title h1 {
    margin: 0;
    font-family: "Open Sans", "Noto Sans", sans-serif;
    font-size: 11px;
    font-weight: normal;
}
.close {
    margin-left: auto;
    align-self: flex-start;
    width: 47px;
    height: 19px;
    border: 1px solid #4c1810;
    border-top: 0;
    border-radius: 0 0 4px 4px;
    box-shadow: inset 0 0 0 1px #e4a494;
    background: linear-gradient(#d88878, #c8503c 48%, #b02a14 50%, #d0593c);
}
.dialog-body {
    display: flex;
    flex-direction: column;
    padding: 7px 8px 8px 6px;
    background-color: #f0f0f0;
    border: 1px solid #44494d;
}
.tabs {
    display: flex;
    align-items: flex-end;
}
.tab {
    height: 19px;
    padding: 0 4px;
    border: 1px solid #8c8e94;
    border-bottom: 0;
    margin-right: -1px;
    background: linear-gradient(#f3f3f3, #ebebeb 50%, #dddddd 51%, #cfcfcf);
}
.tab.active {
    height: 22px;
    padding: 0 6px 3px;
    margin-bottom: -1px;
    background: #fff;
    z-index: 1;
}
.page {
    min-height: 412px;
    padding: 0 15px 0 14px;
    background-color: #fff;
    border: 1px solid #8c8e94;
}
.page-head {
    height: 52px;
    display: flex;
    align-items: center;
    gap: 42px;
    padding-top: 6px;
}
.page-head input {
    flex: 1;
    min-width: 0;
    height: 23px;
    padding: 0 2px 3px;
    font: inherit;
    color: #808080;
    background-color: #fff;
    border: 1px solid #afafaf;
    border-radius: 2px;
}
.page dl {
    margin: 0;
    padding: 6px 0;
    display: grid;
    grid-template-columns: 73px 1fr;
    grid-auto-rows: 26px;
    align-items: center;
    border-top: 1px solid #a0a0a0;
}
.page dd {
    margin: 0;
}
.attributes {
    display: flex;
    align-items: center;
    padding-top: 10px;
    border-top: 1px solid #a0a0a0;
}
.attr-label {
    width: 73px;
}
.check {
    display: flex;
    align-items: center;
    gap: 3px;
    width: 80px;
}
.check input {
    appearance: none;
    width: 13px;
    height: 13px;
    margin: 0;
    border: 1px solid #8e8f8f;
    box-shadow: inset 0 0 0 1px #f4f4f4;
    background: linear-gradient(135deg, #c4c8cc, #f6f6f6);
}
.btn {
    width: 73px;
    height: 21px;
    border: 1px solid #707070;
    border-radius: 3px;
    box-shadow: inset 0 0 0 1px #fcfcfc;
    background: linear-gradient(#f2f2f2, #ebebeb 50%, #dddddd 51%, #cfcfcf);
}
.btn.default {
    margin-left: auto;
    border-color: #3c7fb1;
    box-shadow: inset 0 0 0 1px #48c4ec;
    background: linear-gradient(#eef4f6, #e4eef2 50%, #cfdfe6 51%, #c0d4dc);
}
.btn:disabled {
    color: #838383;
    border-color: #adb2b5;
    background: #f4f4f4;
}
.actions {
    display: flex;
    justify-content: flex-end;
    gap: 8px;
    margin-right: -1px;
    padding-top: 8px;
}

/* Taskbar */
.taskbar {
    height: 39px;
    flex: none;
    display: flex;
    align-items: center;
    padding-left: 8px;
    color: #fff;
    border-top: 1px solid #8a8c94;
    background:
        radial-gradient(ellipse 60px 16px at 850px 6px, #16181e, transparent),
        radial-gradient(ellipse 70px 18px at 940px 4px, #14161c, transparent),
        radial-gradient(ellipse 120px 30px at 1110px 20px, #77788e, transparent),
        linear-gradient(90deg, #0b0c10, #15161c 70px, #50525e 180px, #5c5e70 240px, #666878 700px, #4c5064 900px, #565a70 1080px, #30323e 1180px, #3c3e4c);
}
.apps {
    display: flex;
    gap: 4px;
    margin-left: 14px;
}
.app {
    position: relative;
    width: 58px;
    height: 38px;
    border: 1px solid transparent;
    border-radius: 3px;
}
.app > svg {
    width: 32px;
    height: 32px;
}
.open {
    border-color: #b4b6c0;
    background: linear-gradient(160deg, rgba(255, 255, 255, .5), rgba(255, 255, 255, .15) 50%, rgba(255, 255, 255, .1));
    box-shadow: 0 0 0 1px rgba(10, 10, 20, .5);
}
.stack {
    width: 53px;
    margin-right: 5px;
}
.stack::after {
    content: "";
    position: absolute;
    top: -1px;
    bottom: -1px;
    right: -5px;
    width: 4px;
    border: 1px solid #a4a6b2;
    border-left: 0;
    border-radius: 0 3px 3px 0;
}
.lit {
    background: linear-gradient(160deg, #fff, #a8aab0 60%, #d4d4d8);
}
.aw {
    width: 31px;
    height: 32px;
    display: flex;
    flex-direction: column;
    align-items: center;
    border-radius: 2px;
    font-size: 12px;
    font-weight: bold;
    line-height: 10px;
    color: #303030;
    background-color: #fff;
}
.aw svg {
    width: 29px;
    height: 14px;
}
.tray {
    margin-left: auto;
    height: 38px;
    display: flex;
    align-items: center;
}
.tray-flag {
    width: 23px;
    height: 38px;
    margin: 0 8px 0 9px;
    border: 1px solid #5c5e6a;
    border-width: 0 1px;
    background: radial-gradient(ellipse 12px 6px at 50% 100%, #a4c8f0, #1c1e28);
}
.tray-net {
    margin: 0 12px 0 9px;
}
.clock {
    display: flex;
    flex-direction: column;
    align-items: center;
    width: 60px;
    line-height: 17px;
}
.show-desktop {
    width: 15px;
    height: 38px;
    margin-left: 8px;
    border: 1px solid #8c8e9a;
    background: linear-gradient(150deg, #8a8c98, #3c3e4a);
}
```
